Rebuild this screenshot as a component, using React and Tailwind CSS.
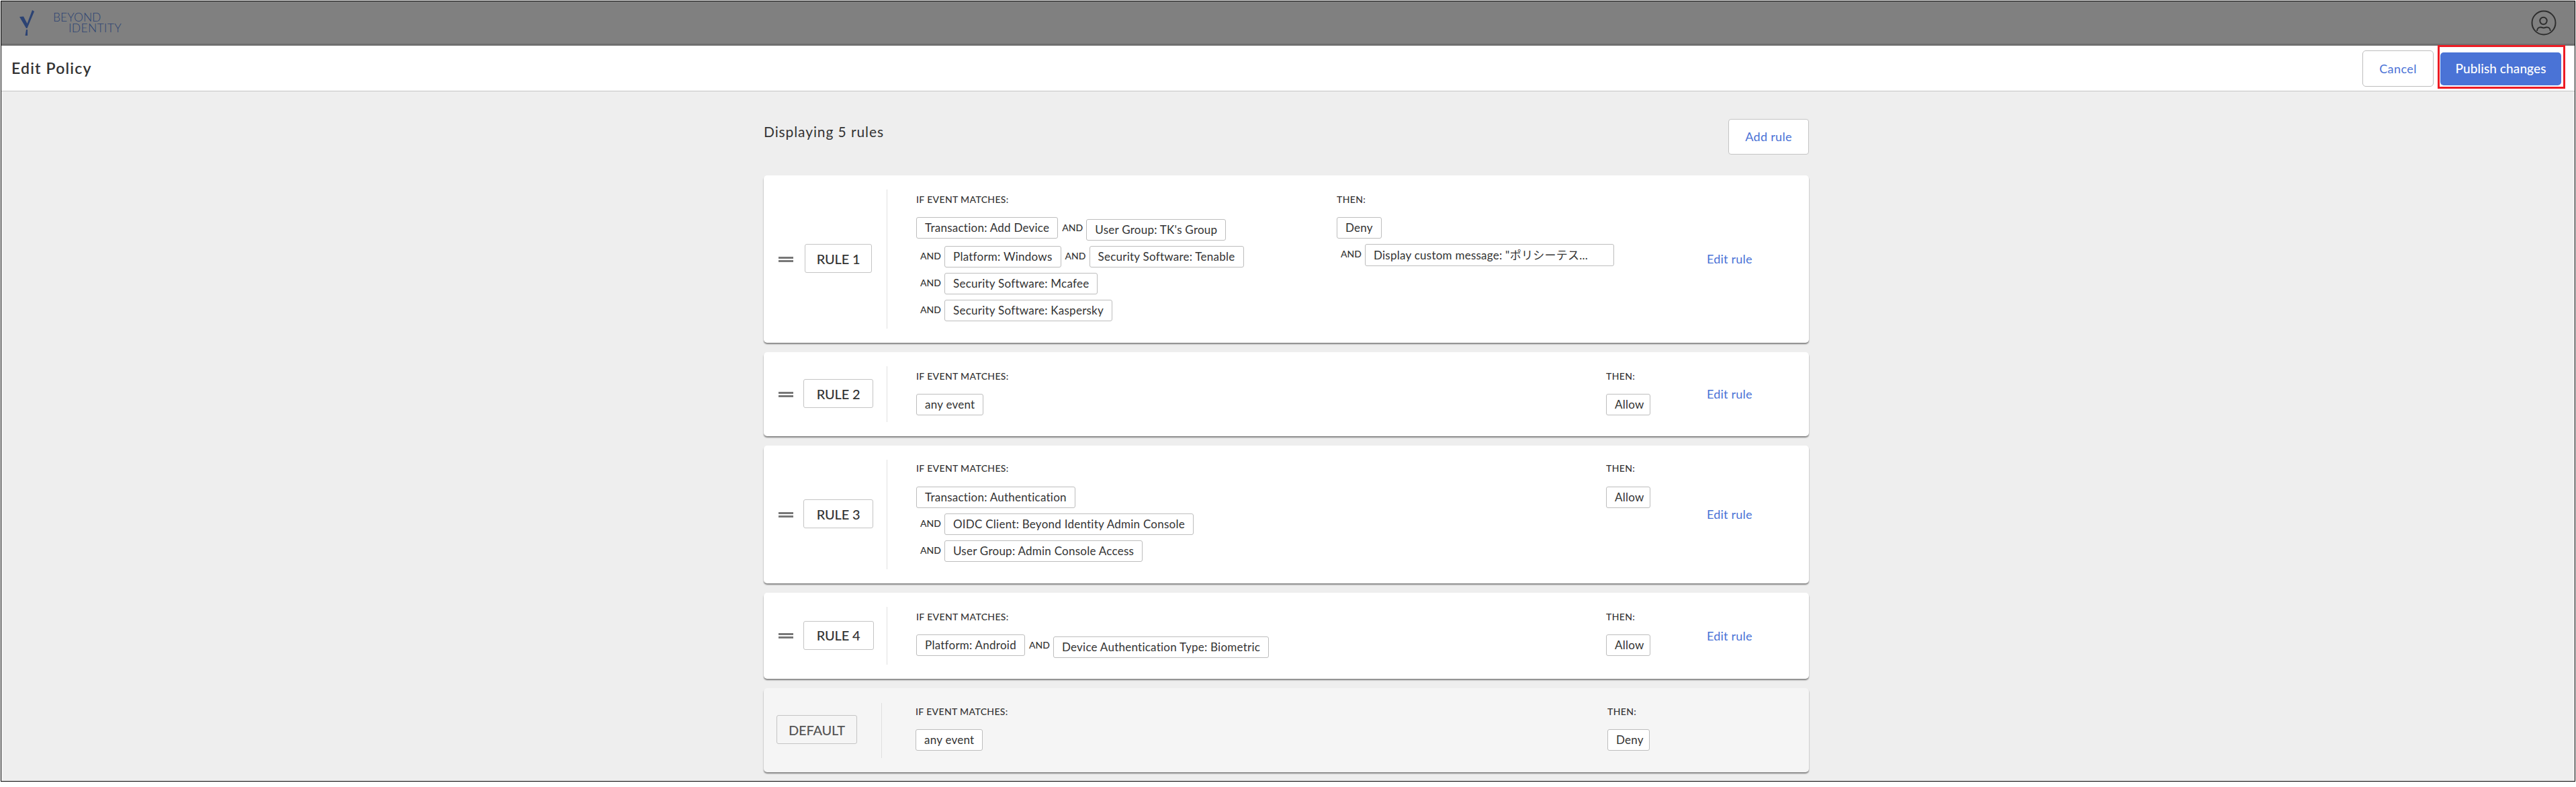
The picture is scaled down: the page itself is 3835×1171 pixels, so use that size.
const FONT = "font-['Lato','Noto_Sans_CJK_JP',sans-serif]";

const Chip = ({ children, className = "" }) => (
  <span className={`inline-flex h-8 items-center whitespace-nowrap rounded-[3px] border border-[#bdbdbd] bg-white px-3 text-[17px] tracking-[0.25px] text-[#333] ${className}`}>
    {children}
  </span>
);

const And = () => (
  <span className="mx-1.5 -mt-1 w-[30px] whitespace-nowrap text-center text-[14px] font-medium text-[#333]">AND</span>
);

const Label = ({ children }) => (
  <div className="whitespace-nowrap text-[14px] font-medium leading-5 tracking-[0.35px] text-[#333]">{children}</div>
);

const Handle = () => (
  <div className="flex w-[22px] shrink-0 flex-col gap-[2px]">
    <div className="h-[3px] bg-[#777]" />
    <div className="h-[3px] bg-[#777]" />
  </div>
);

const RuleBox = ({ name, width, muted }) => (
  <div className={`-mt-[2px] flex h-[43px] shrink-0 items-center justify-center rounded-[3px] border border-[#c4c4c4] text-[20px] font-medium tracking-[-0.2px] ${width} ${muted ? "bg-[#f5f5f5] text-[#555]" : "bg-white text-[#333]"}`}>
    {name}
  </div>
);

const Avatar = () => (
  <svg width="38" height="38" viewBox="0 0 38 38" fill="none" stroke="#2e2e2e" strokeWidth="2">
    <circle cx="19" cy="19" r="17.5" />
    <circle cx="18.5" cy="16" r="5.2" />
    <path d="M9 31c0-3.6 2.5-5.6 5.2-5.6 1.2 0 2.3 1 4.6 1s3.6-1 4.8-1c2.7 0 5.2 2 5.2 5.6" />
  </svg>
);

const rules = [
  {
    name: "RULE 1",
    boxWidth: "w-[100px]",
    height: "h-[249px]",
    rows: [
      ["Transaction: Add Device", "User Group: TK's Group"],
      ["Platform: Windows", "Security Software: Tenable"],
      ["Security Software: Mcafee"],
      ["Security Software: Kaspersky"],
    ],
    customThen: true,
  },
  { name: "RULE 2", boxWidth: "w-[104px]", height: "h-[125px]", rows: [["any event"]], then: "Allow" },
  {
    name: "RULE 3",
    boxWidth: "w-[104px]",
    height: "h-[205px]",
    tight: true,
    rows: [["Transaction: Authentication"], ["OIDC Client: Beyond Identity Admin Console"], ["User Group: Admin Console Access"]],
    then: "Allow",
  },
  { name: "RULE 4", boxWidth: "w-[105px]", height: "h-[128px]", rows: [["Platform: Android", "Device Authentication Type: Biometric"]], then: "Allow" },
];

const Conditions = ({ rows }) => (
  <div className="flex flex-col gap-2">
    {rows.map((row, i) => (
      <div key={i} className="flex items-start">
        {row.map((text, j) => (
          <div key={text} className="flex items-center">
            {(i > 0 || j > 0) && <And />}
            <Chip className={i === 0 && j > 0 ? "mt-[3px]" : ""}>{text}</Chip>
          </div>
        ))}
      </div>
    ))}
  </div>
);

const RuleCard = ({ rule }) => (
  <div className={`flex items-center rounded-[5px] bg-white pl-[22px] shadow-[0_2px_2px_rgba(0,0,0,0.45)] ${rule.height}`}>
    <Handle />
    <div className="flex w-[139px] shrink-0 justify-center pr-[5px]">
      <RuleBox name={rule.name} width={rule.boxWidth} />
    </div>
    <div className="mr-[43px] h-[calc(100%-42px)] w-px shrink-0 bg-[#e0e0e0]" />
    <div className={`flex h-full w-[1177px] shrink-0 ${rule.tight ? "pt-6" : "pt-[26px]"}`}>
      <div className={rule.customThen ? "w-[626px]" : "w-[1027px]"}>
        <Label>IF EVENT MATCHES:</Label>
        <div className={rule.tight ? "mt-[17px]" : "mt-4"}>
          <Conditions rows={rule.rows} />
        </div>
      </div>
      <div>
        <Label>THEN:</Label>
        <div className={rule.tight ? "mt-[17px]" : "mt-4"}>
          {rule.customThen ? (
            <>
              <Chip>Deny</Chip>
              <div className="mt-2 flex items-center">
                <And />
                <Chip className="h-[33px] w-[371px]">Display custom message: "ポリシーテス...</Chip>
              </div>
            </>
          ) : (
            <Chip className="w-[66px]">{rule.then}</Chip>
          )}
        </div>
      </div>
    </div>
    <a className="whitespace-nowrap text-[18px] tracking-[0.2px] text-[#4a72d6]">Edit rule</a>
  </div>
);

const App = () => (
  <div className={`h-[1171px] w-[3835px] overflow-hidden bg-white px-px pt-px ${FONT}`}>
    <div className="flex h-[1162px] flex-col border border-black bg-[#eee]">
      <header className="flex h-[66px] shrink-0 items-center justify-between border-b-[3px] border-[#6e6e6e] bg-[#808080] pl-[26px] pr-[27px]">
        <div className="flex items-center gap-[27px]">
          <svg width="24" height="40" viewBox="0 0 24 40" fill="#2c4373">
            <path d="M1 11 L7 10.5 L12.5 21 L20 1 L23 3 L12.5 28 L11 28 Z" />
            <path d="M9.5 39 L11 30 L13 30 L13 39 Z" />
          </svg>
          <div className="text-[17.5px] font-light leading-[16px] text-[#2c4373]">
            <div>BEYOND</div>
            <div className="pl-[23px] tracking-[0.3px]">IDENTITY</div>
          </div>
        </div>
        <Avatar />
      </header>

      <div className="flex h-[68px] shrink-0 items-center justify-between border-b border-[#c4c4c4] bg-white pl-[15px] pr-[20px]">
        <h1 className="text-[23px] font-semibold tracking-[1.2px] text-[#333]">Edit Policy</h1>
        <div className="flex items-center gap-[10px] pt-px">
          <button className="h-[54px] w-[106px] rounded-[5px] border border-[#bdbdbd] text-[18px] tracking-[0.4px] text-[#4a72d6]">Cancel</button>
          <div className="relative">
            <button className="block h-[49px] w-[180px] rounded-[5px] bg-[#4a73d6] text-[19px] font-medium tracking-[0.1px] text-white">Publish changes</button>
            {/* red annotation frame drawn over the button */}
            <div className="absolute -bottom-[5px] -left-[4px] -right-[6px] -top-[11px] border-[3px] border-[#ed1c24]" />
          </div>
        </div>
      </div>

      <main className="ml-[1135px] mt-[41px] w-[1556px]">
        <div className="flex h-[84px] items-start justify-between">
          <span className="mt-[3px] text-[21px] tracking-[0.9px] text-[#333]">Displaying 5 rules</span>
          <button className="h-[53px] w-[120px] rounded-[4px] border border-[#c4c4c4] bg-white text-[18px] tracking-[0.3px] text-[#4a72d6]">Add rule</button>
        </div>
        <div className="flex flex-col gap-[14px]">
          {rules.map((rule) => (
            <RuleCard key={rule.name} rule={rule} />
          ))}
          <div className="flex h-[125px] items-center rounded-[5px] bg-[#f5f5f5] pl-[19px] shadow-[0_2px_2px_rgba(0,0,0,0.45)]">
            <RuleBox name="DEFAULT" width="w-[120px]" muted />
            <div className="ml-9 mr-[50px] h-[82px] w-px shrink-0 bg-[#e0e0e0]" />
            <div className="flex h-full pt-[25px]">
              <div className="w-[1030px]">
                <Label>IF EVENT MATCHES:</Label>
                <div className="mt-4"><Chip>any event</Chip></div>
              </div>
              <div>
                <Label>THEN:</Label>
                <div className="mt-4"><Chip className="w-[63px]">Deny</Chip></div>
              </div>
            </div>
          </div>
        </div>
      </main>
    </div>
  </div>
);

export default App;
